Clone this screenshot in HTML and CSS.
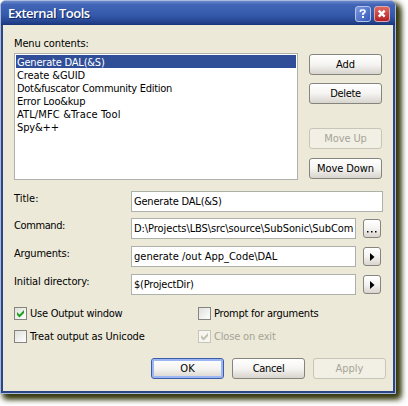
FILE: index.html
```html
<!DOCTYPE html>
<html lang="en">
<head>
<meta charset="utf-8">
<title>External Tools</title>
<link rel="stylesheet" href="styles.css">
</head>
<body>
<main class="window">
  <header class="titlebar">
    <h1><span class="t-heading">External Tools</span></h1>
    <button class="caption-button help" aria-label="Help"><svg width="16" height="16" viewBox="0 0 16 16"><path d="M5.500 6V5q0-1 1-1h2q1.500 0 1.500 1.500T8 7.500V9" fill="none" stroke="#fff" stroke-width="1.700"/><path d="M7 10h2v2H7z" fill="#fff"/></svg></button>
    <button class="caption-button close" aria-label="Close"><svg width="16" height="16" viewBox="0 0 16 16"><path d="M4.700 4.700l6 6m0-6l-6 6" stroke="#fff" stroke-width="2.400"/></svg></button>
  </header>
  <section class="content">
    <div class="menu-label"><span class="t-menu">Menu contents:</span></div>
    <div class="menu-area">
      <ul class="listbox">
        <li class="selected"><span class="t-dal">Generate DAL(&amp;S)</span></li>
        <li><span class="t-guid">Create &amp;GUID</span></li>
        <li><span class="t-dot">Dot&amp;fuscator Community Edition</span></li>
        <li><span class="t-error">Error Loo&amp;kup</span></li>
        <li><span class="t-trace">ATL/MFC &amp;Trace Tool</span></li>
        <li><span class="t-spy">Spy&amp;++</span></li>
      </ul>
      <div class="side-buttons">
        <button class="button">Add</button>
        <button class="button"><span class="t-short">Delete</span></button>
        <button class="button move-up" disabled><span class="t-move">Move Up</span></button>
        <button class="button"><span class="t-move">Move Down</span></button>
      </div>
    </div>
    <div class="fields">
      <div class="row title-row"><label>Title:</label><div class="field"><span class="t-dal">Generate DAL(&amp;S)</span></div></div>
      <div class="row"><label class="t-command">Command:</label><div class="field"><span class="t-path">D:\Projects\LBS\src\source\SubSonic\SubCom</span></div><button class="mini" aria-label="Browse"><svg width="16" height="17" viewBox="0 0 16 17"><path d="M3 11h1.500v1.500H3zm4 0h1.500v1.500H7zm4 0h1.500v1.500H11z"/></svg></button></div>
      <div class="row"><label class="t-arguments">Arguments:</label><div class="field"><span>generate /out App_Code\DAL</span></div><button class="mini" aria-label="Insert argument"><svg width="16" height="17" viewBox="0 0 16 17"><path d="M6 5v8l4.500-4z"/></svg></button></div>
      <div class="row"><label class="t-initial">Initial directory:</label><div class="field"><span class="t-project">$(ProjectDir)</span></div><button class="mini" aria-label="Insert directory"><svg width="16" height="17" viewBox="0 0 16 17"><path d="M6 5v8l4.500-4z"/></svg></button></div>
    </div>
    <div class="options">
      <label class="option"><span class="check"><svg width="11" height="11" viewBox="0 0 11 11"><path d="M2 4v3l2.500 2.500L9 5V2L4.500 6.500z" fill="#21a121"/></svg></span><span class="t-output">Use Output window</span></label>
      <label class="option"><span class="check"></span><span class="t-prompt">Prompt for arguments</span></label>
      <label class="option"><span class="check"></span><span class="t-unicode">Treat output as Unicode</span></label>
      <label class="option off"><span class="check"><svg width="11" height="11" viewBox="0 0 11 11"><path d="M2 4v3l2.500 2.500L9 5V2L4.500 6.500z" fill="#c2c1b3"/></svg></span><span class="t-exit">Close on exit</span></label>
    </div>
    <footer class="actions">
      <button class="button default">OK</button>
      <button class="button"><span class="t-short">Cancel</span></button>
      <button class="button" disabled>Apply</button>
    </footer>
  </section>
</main>
</body>
</html>
```
FILE: styles.css
```css
* { box-sizing: border-box; }
body {
  margin: 0;
  width: 408px;
  height: 406px;
  overflow: hidden;
  background: #fefefe;
  font: 11px/13px "DejaVu Sans Condensed", "DejaVu Sans", sans-serif;
  font-stretch: condensed;
  color: #000;
}
.window {
  width: 396px;
  height: 394px;
  border: 1px solid #a9badd;
  border-radius: 6px 6px 0 0;
  background: #2c4685;
  box-shadow: 4px 4px 6px #36380d, 4px 4px 6px #36380d;
}
.titlebar {
  height: 24px;
  display: flex;
  align-items: center;
  padding: 1px 5px 0 7px;
  border-radius: 5px 5px 0 0;
  background: linear-gradient(#6c88cc, #4265b7 15%, #3458aa 60%, #25448e 88%, #18347a);
}
h1 {
  flex: 1;
  margin: -2px 0 0;
  font: 600 13px/16px "Open Sans", sans-serif;
  color: #fff;
  text-shadow: 1px 1px #142b66;
}
.caption-button {
  width: 16px;
  height: 16px;
  padding: 0;
  margin-left: 3px;
  border: 1px solid #b5c3e8;
  border-radius: 3px;
  background: linear-gradient(135deg, #7b98e0, #3459b9);
}
.caption-button svg { display: block; margin: -1px; }
.close { border-color: #dda8ad; background: linear-gradient(#dc6a60, #b61f24); }
.content {
  height: 366px;
  margin: 0 2px;
  padding: 12px 7px 0 11px;
  background: #ece9d8;
}
.menu-label { height: 16px; }
.menu-area { display: flex; gap: 11px; height: 127px; }
.listbox {
  width: 284px;
  height: 127px;
  margin: 0;
  padding: 1px;
  list-style: none;
  border: 1px solid #aeb0aa;
  background: #fff;
}
.listbox li { height: 13px; padding-left: 1px; line-height: 15px; white-space: nowrap; }
.listbox .selected { background: #304e98; color: #fff; }
.side-buttons { display: flex; flex-direction: column; gap: 8px; padding-top: 1px; }
.button {
  width: 73px;
  height: 21px;
  flex: none;
  padding: 0;
  font: inherit;
  color: #000;
  border: 1px solid #85847f;
  border-radius: 3px;
  background: linear-gradient(#fff, #f5f4f1 50%, #d8d4ce);
  white-space: nowrap;
}
.side-buttons .move-up { margin: 16px 0 1px; }
.button:disabled { color: #a6a496; border-color: #c7c5b7; background: #f2f0e5; }
.button.default { border-color: #3c5ca8; box-shadow: inset 0 0 0 2px #9bb6f3; }
.fields { display: flex; flex-direction: column; gap: 7px; padding-top: 11px; }
.row { display: flex; height: 21px; }
.title-row { margin-bottom: -1px; }
.row label { width: 117px; padding-top: 1px; }
.field {
  width: 225px;
  height: 21px;
  padding: 3px 2px;
  border: 1px solid #aeb0aa;
  background: #fff;
  white-space: nowrap;
  overflow: hidden;
}
.title-row .field { width: 252px; }
.mini {
  width: 18px;
  height: 19px;
  margin: 1px 0 0 7px;
  padding: 0;
  border: 1px solid #85847f;
  border-radius: 3px;
  background: linear-gradient(#fff, #f5f4f1 50%, #d8d4ce);
}
.mini svg { display: block; }
.options { display: grid; grid-template-columns: 184px 1fr; row-gap: 10px; padding-top: 12px; }
.option { display: flex; gap: 2px; height: 13px; }
.option > span:last-child { padding-left: 1px; }
.check {
  width: 13px;
  height: 13px;
  border: 1px solid #85847f;
  background: linear-gradient(135deg, #dfdfdb, #fff);
}
.check svg { display: block; }
.off { color: #a6a496; }
.off .check { border-color: #c7c5b7; background: #f7f6ef; }
.actions { display: flex; justify-content: flex-end; gap: 8px; padding-top: 15px; }

/* Tracking for each caption */
.t-heading { letter-spacing: -.5px; }
.t-menu { letter-spacing: -.15px; }
.t-dal { letter-spacing: -.2px; }
.t-guid { letter-spacing: -.1px; }
.t-dot { letter-spacing: -.28px; }
.t-error { letter-spacing: -.15px; }
.t-trace { letter-spacing: .13px; }
.t-spy { letter-spacing: -.15px; }
.t-short { letter-spacing: -.3px; }
.t-move { letter-spacing: -.1px; }
.t-command { letter-spacing: -.4px; }
.t-arguments { letter-spacing: -.2px; }
.t-initial { letter-spacing: -.1px; }
.t-path { letter-spacing: -.08px; }
.t-project { letter-spacing: -.2px; }
.t-output { letter-spacing: -.25px; }
.t-prompt { letter-spacing: -.22px; }
.t-unicode { letter-spacing: -.13px; }
.t-exit { letter-spacing: -.18px; }
```
